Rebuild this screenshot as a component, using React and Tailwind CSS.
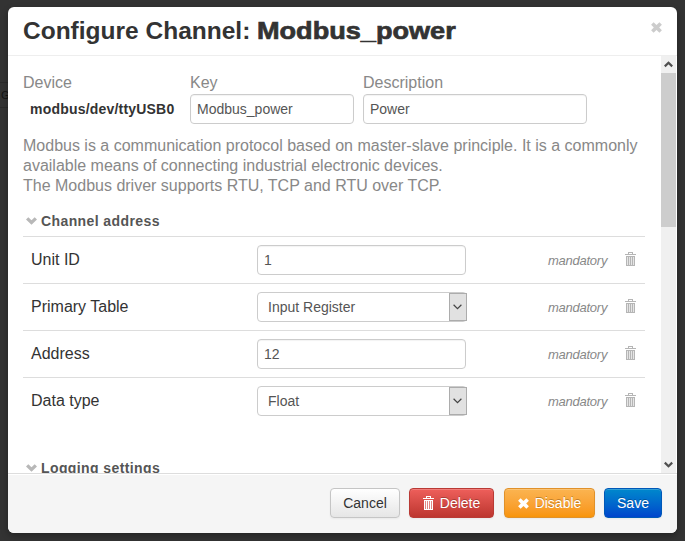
import React from "react";

function Trash({ className }) {
  return (
    <svg className={className} width="11" height="14" viewBox="0 0 11 14" fill="none" stroke="currentColor" shapeRendering="crispEdges">
      <path d="M3.5 2V.5h4V2M0 2.5h11" />
      <path d="M1.5 4v9.5h8V4M3.5 4v9M5.5 4v9M7.5 4v9M1 4.5h9" />
      <path d="M2 5h7v8H2z" fill="currentColor" fillOpacity="0.35" stroke="none" />
    </svg>
  );
}

function Cross({ className, size }) {
  return (
    <svg className={className} width={size} height={size} viewBox="0 0 11 11" fill="currentColor">
      <path d="M2.6 0.2 5.5 2.9 8.4 0.2 10.9 2.7 8.2 5.5 10.9 8.3 8.4 10.8 5.5 8.1 2.6 10.8 0.1 8.3 2.8 5.5 0.1 2.7z" />
    </svg>
  );
}

function SectionTitle({ children }) {
  return (
    <h4 className="flex h-5 items-center pl-[3px] text-[14px] leading-5 font-bold tracking-[0.4px] text-[#555]">
      <svg className="mr-1 shrink-0 text-[#b8b8b8]" width="11" height="8" viewBox="0 0 11 8" fill="currentColor">
        <path d="M0 2.4 2.3 0.2 5.5 3.2 8.7 0.2 11 2.4 5.5 7.8z" />
      </svg>
      {children}
    </h4>
  );
}

function TextBox({ value, className }) {
  return (
    <div className={`flex h-[30px] items-center rounded-[4px] border border-[#ccc] bg-white px-1.5 text-[14px] text-[#555] shadow-[inset_0_1px_1px_rgba(0,0,0,0.05)] ${className}`}>
      {value}
    </div>
  );
}

function SelectBox({ value }) {
  return (
    <div className="flex h-[30px] w-[210px] items-stretch rounded-[4px] border border-[#ccc] bg-white text-[14px] text-[#555]">
      <span className="flex flex-1 items-center pl-[10px]">{value}</span>
      <span className="-mr-px flex w-[18px] items-center justify-center border border-[#acacac] bg-[#e1e1e1] pr-px text-[#444]">
        <svg width="9" height="6" viewBox="0 0 9 6" fill="none" stroke="currentColor" strokeWidth="1.2">
          <path d="M0.6 0.8 4.5 4.6 8.4 0.8" />
        </svg>
      </span>
    </div>
  );
}

const rows = [
  { label: "Unit ID", value: "1" },
  { label: "Primary Table", value: "Input Register", select: true },
  { label: "Address", value: "12" },
  { label: "Data type", value: "Float", select: true },
];

function Button({ className, children }) {
  return (
    <button className={`flex h-[30px] items-center justify-center rounded-[4px] border bg-linear-to-b text-[14px] leading-5 shadow-[inset_0_1px_0_rgba(255,255,255,0.2),0_1px_2px_rgba(0,0,0,0.05)] ${className}`}>
      {children}
    </button>
  );
}

function ScrollArrow({ d }) {
  return (
    <div className="flex h-[17px] items-center justify-center text-[#505050]">
      <svg width="9" height="7" viewBox="0 0 9 7" fill="none" stroke="currentColor" strokeWidth="2.2">
        <path d={d} />
      </svg>
    </div>
  );
}

export default function App() {
  return (
    <div className="relative h-[541px] w-[685px] overflow-hidden bg-[#333] pt-[7px] pl-2 font-['Liberation_Sans',Arial,sans-serif] text-[#333]">
      <div className="absolute top-[82px] left-0 h-[26px] w-3 border-y border-[#2a2a2a] pl-px text-[11px] leading-6 text-[#141414]">G</div>
      <div className="relative flex h-[526px] w-[669px] flex-col overflow-hidden rounded-[6px] bg-white shadow-[0_3px_7px_rgba(0,0,0,0.3)]">
        <header className="flex h-[49px] shrink-0 items-start justify-between border-b border-[#eee] pr-[15px] pl-[15px]">
          <h3 className="pt-1 text-[24.5px] leading-10 font-bold whitespace-nowrap">
            Configure Channel:{" "}
            <strong className="inline-block origin-left scale-x-[1.106] [-webkit-text-stroke:0.7px_#333]">Modbus_power</strong>
          </h3>
          <Cross size={11} className="mt-[15px] text-[#ccc]" />
        </header>
        <div className="flex h-[417px] shrink-0 overflow-hidden">
          <main className="w-[637px] shrink-0 pt-4 pl-[15px]">
            <div className="flex text-[16px] leading-5 text-[#888]">
              <div className="w-[167px]">
                <div className="h-[22px] pt-px">Device</div>
                <div className="pt-[5px] pl-[7px] text-[14px] font-bold tracking-[0.2px] text-[#333]">modbus/dev/ttyUSB0</div>
              </div>
              <div className="w-[173px]">
                <div className="h-[22px] pt-px">Key</div>
                <TextBox value="Modbus_power" className="w-[164px]" />
              </div>
              <div>
                <div className="h-[22px] pt-px">Description</div>
                <TextBox value="Power" className="w-[224px]" />
              </div>
            </div>
            <p className="mt-3 text-[16px] leading-5 whitespace-nowrap text-[#888]">
              Modbus is a communication protocol based on master-slave principle. It is a commonly
              <br />
              available means of connecting industrial electronic devices.
              <br />
              The Modbus driver supports RTU, TCP and RTU over TCP.
            </p>
            <div className="mt-[15px]">
              <SectionTitle>Channel address</SectionTitle>
            </div>
            <div className="mt-[5px]">
              {rows.map((r) => (
                <div key={r.label} className="flex h-[47px] border-t border-[#ddd] pt-2 pl-2">
                  <div className="w-[226px] pt-[5px] text-[16px] leading-5">{r.label}</div>
                  <div className="w-[291px]">
                    {r.select ? <SelectBox value={r.value} /> : <TextBox value={r.value} className="w-[209px]" />}
                  </div>
                  <em className="w-[77px] pt-[6px] text-[13px] leading-5 tracking-[-0.25px] text-[#888]">mandatory</em>
                  <Trash className="mt-[7px] text-[#b5b5b5]" />
                </div>
              ))}
            </div>
            <div className="mt-[34px]">
              <SectionTitle>Logging settings</SectionTitle>
            </div>
          </main>
          <div className="ml-4 flex w-[15px] shrink-0 flex-col bg-[#f0f0f0]">
            <ScrollArrow d="M0.8 5.4 4.5 1.8 8.2 5.4" />
            <div className="h-[154px] bg-[#cdcdcd]" />
            <div className="flex-1" />
            <ScrollArrow d="M0.8 1.6 4.5 5.2 8.2 1.6" />
          </div>
        </div>
        <footer className="flex flex-1 justify-end border-t border-[#ddd] bg-[#f5f5f5] pt-[14px] pr-[15px] shadow-[inset_0_1px_0_#fff]">
          <Button className="mr-[9px] w-[70px] border-[#c5c5c5] from-white to-[#e6e6e6] text-[#333]">Cancel</Button>
          <Button className="mr-[10px] w-[85px] border-[#b93a35] from-[#ee5f5b] to-[#bd362f] text-white [text-shadow:0_-1px_0_rgba(0,0,0,0.25)]">
            <Trash className="mr-[6px]" />
            Delete
          </Button>
          <Button className="mr-[9px] w-[91px] border-[#e0912a] from-[#fbb450] to-[#f89406] text-white [text-shadow:0_-1px_0_rgba(0,0,0,0.25)]">
            <Cross size={11} className="mr-[6px]" />
            Disable
          </Button>
          <Button className="w-[58px] border-[#0058b8] from-[#0088cc] to-[#0044cc] text-white [text-shadow:0_-1px_0_rgba(0,0,0,0.25)]">Save</Button>
        </footer>
      </div>
    </div>
  );
}
